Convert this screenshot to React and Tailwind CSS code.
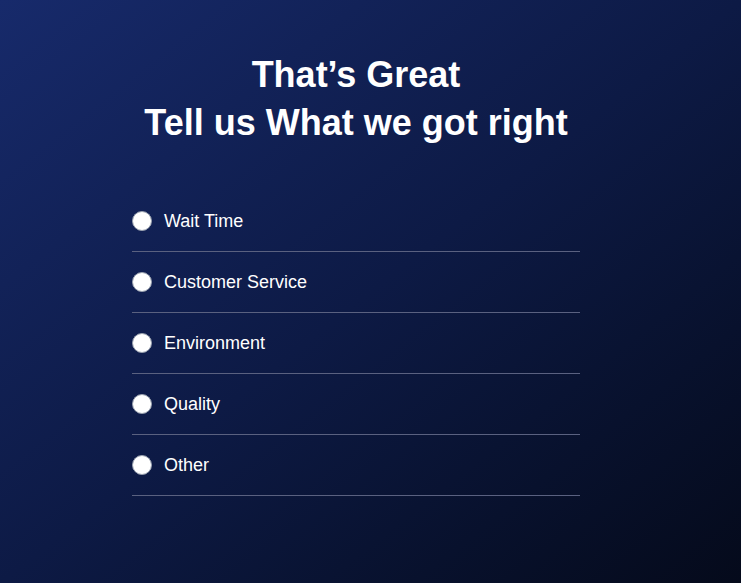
import React, { useState } from 'react';

const options = ['Wait Time', 'Customer Service', 'Environment', 'Quality', 'Other'];

const App = () => {
  const [selected, setSelected] = useState(null);

  return (
    <div className="min-h-screen w-full bg-gradient-to-br from-[#172a6b] via-[#0d1a45] to-[#050a1b] font-['Liberation_Sans',Arial,sans-serif] text-white">
      <div className="ml-[132px] w-[448px] pt-[51px]">
        <h1 className="text-center text-[36px] font-bold leading-[48px]">
          That’s Great
          <br />
          Tell us What we got right
        </h1>

        <ul className="mt-[44px]">
          {options.map(opt => (
            <li key={opt} className="border-b border-[#5a6180]">
              <label className="flex h-[60px] cursor-pointer items-center gap-3">
                <input
                  type="radio"
                  name="feedback"
                  value={opt}
                  checked={selected === opt}
                  onChange={() => setSelected(opt)}
                  className="sr-only"
                />
                <span className="flex h-5 w-5 items-center justify-center rounded-full border border-gray-400 bg-white">
                  {selected === opt && <span className="h-2.5 w-2.5 rounded-full bg-[#172a6b]" />}
                </span>
                <span className="text-[18px]">{opt}</span>
              </label>
            </li>
          ))}
        </ul>
      </div>
    </div>
  );
};

export default App;
